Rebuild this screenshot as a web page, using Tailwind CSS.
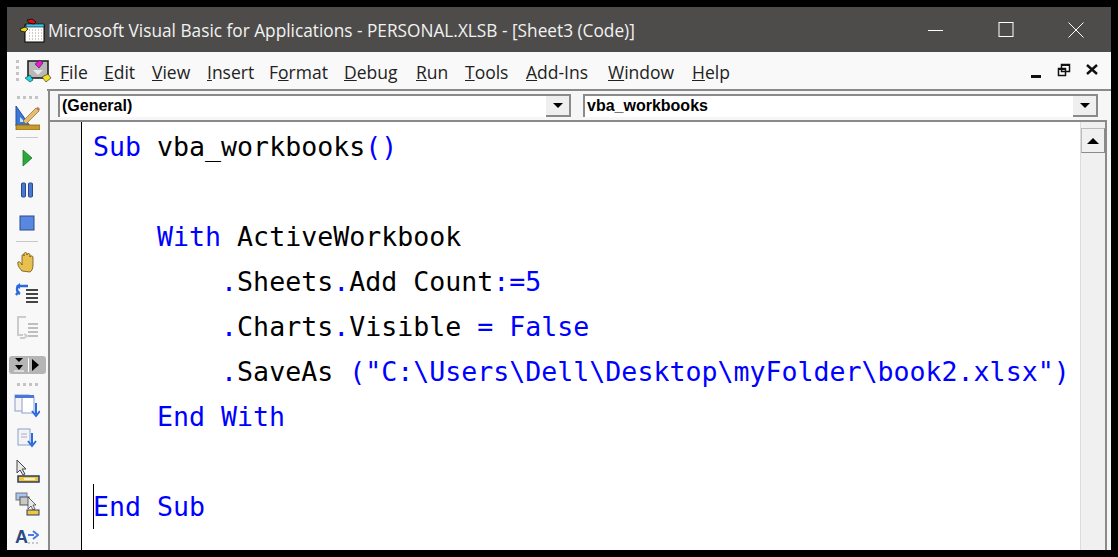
<!DOCTYPE html>
<html lang="en">
<head>
  <meta charset="UTF-8">
  <script src="https://cdn.jsdelivr.net/npm/@tailwindcss/browser@4"></script>
  <title>Microsoft Visual Basic for Applications</title>
</head>
<body class="bg-black w-[1118px] h-[557px] overflow-hidden pt-[7px] pl-[7px]">
<div class="w-[1104px] h-[543px] flex flex-col bg-[#f6f6f6] overflow-hidden">

  <!-- Title bar -->
  <header class="h-[45px] shrink-0 bg-[#4d4c4a] flex items-center text-[#f2f2f2]">
    <svg class="ml-[12px] mr-[3px] w-[26px] h-[26px] shrink-0" viewBox="0 0 26 26">
      <rect x="6" y="8" width="19" height="17" fill="#fff" stroke="#000"/>
      <rect x="7" y="7" width="18" height="3" fill="#39c6f0" stroke="#000" stroke-width=".6"/>
      <path d="M8 3l5-1 4 3-2 2-5-1z" fill="#e01010" stroke="#000" stroke-width=".7"/>
      <path d="M1 12l5-2 3 2-3 3-4-1z" fill="#e8d820" stroke="#000" stroke-width=".7"/>
      <path d="M10 13h13M10 16h13M10 19h13M10 22h13" stroke="#999" stroke-dasharray="1 2"/>
    </svg>
    <span class="font-['Open_Sans',sans-serif] text-[17.250px] relative top-[1px]">Microsoft Visual Basic for Applications - PERSONAL.XLSB - [Sheet3 (Code)]</span>
    <div class="ml-auto flex items-center">
      <svg class="w-[16px] h-[16px] mr-[54px]" viewBox="0 0 16 16"><path d="M0 8.500h15" stroke="#fff"/></svg>
      <svg class="w-[16px] h-[16px] mr-[54px]" viewBox="0 0 16 16"><rect x="1" y=".5" width="14" height="14" fill="none" stroke="#fff"/></svg>
      <svg class="w-[16px] h-[16px] mr-[27px]" viewBox="0 0 16 16"><path d="M.5.5l15 15M15.500.5l-15 15" stroke="#fff"/></svg>
    </div>
  </header>

  <!-- Menu bar -->
  <div class="h-[37px] shrink-0 bg-[#f9f9f9] flex items-center relative">
    <div class="ml-[9px] w-[3px] h-[22px] flex flex-col justify-between">
      <i class="block w-[3px] h-[3px] bg-[#c4c4c4]"></i><i class="block w-[3px] h-[3px] bg-[#c4c4c4]"></i><i class="block w-[3px] h-[3px] bg-[#c4c4c4]"></i><i class="block w-[3px] h-[3px] bg-[#c4c4c4]"></i>
    </div>
    <svg class="ml-[5px] w-[28px] h-[24px] shrink-0" viewBox="0 0 28 24">
      <rect x="4" y="2" width="20" height="17" fill="#b8b8b8" stroke="#222" stroke-width="1.6"/>
      <path d="M9 11l5 5 5-5z" fill="#e8e8e8"/>
      <path d="M11 5l5-4 3 3-4 5z" fill="#f018d8" stroke="#222" stroke-width=".6"/>
      <path d="M1 19l5-3 3 5-3 2z" fill="#18d8e8" stroke="#222" stroke-width=".6"/>
      <path d="M18 18l6-3 3 4-5 4z" fill="#f0e020" stroke="#222" stroke-width=".6"/>
    </svg>
    <nav class="absolute left-[53px] top-[9px] flex font-['Open_Sans',sans-serif] text-[17.500px] leading-[22px] text-[#222]">
      <span class="w-[44px]"><u>F</u>ile</span>
      <span class="w-[48px]"><u>E</u>dit</span>
      <span class="w-[55px]"><u>V</u>iew</span>
      <span class="w-[62px]"><u>I</u>nsert</span>
      <span class="w-[75px]">F<u>o</u>rmat</span>
      <span class="w-[72px]"><u>D</u>ebug</span>
      <span class="w-[49px]"><u>R</u>un</span>
      <span class="w-[61px]"><u>T</u>ools</span>
      <span class="w-[82px]"><u>A</u>dd-Ins</span>
      <span class="w-[84px]"><u>W</u>indow</span>
      <span><u>H</u>elp</span>
    </nav>
    <div class="ml-auto flex items-center gap-[14px] mr-[12px]">
      <svg class="w-[14px] h-[14px] relative top-[1px]" viewBox="0 0 14 14"><path d="M2 10h10v3H2z" fill="#111"/></svg>
      <svg class="w-[14px] h-[14px] relative -top-[1px]" viewBox="0 0 14 14"><path d="M4.500 1.500h8v7h-8zM1.500 5.500h7v7h-7z" fill="#fff" stroke="#111" stroke-width="1.500"/><path d="M4 1h9v2H4zM1 5h8v2H1z" fill="#111"/></svg>
      <svg class="w-[14px] h-[14px] relative -top-[1px]" viewBox="0 0 14 14"><path d="M2 2l10 9M12 2L2 11" stroke="#111" stroke-width="2.400"/></svg>
    </div>
  </div>

  <div class="flex-1 flex min-h-0 border-t-[2px] border-[#8a8a8a]">
    <!-- Left toolbar -->
    <aside class="w-[40px] shrink-0 -mt-[2px] bg-[#f8f8f8] flex flex-col items-center relative">
      <div class="mt-[7px] h-[3px] flex gap-[3px]"><i class="block w-[3px] h-[3px] bg-[#c4c4c4]"></i><i class="block w-[3px] h-[3px] bg-[#c4c4c4]"></i><i class="block w-[3px] h-[3px] bg-[#c4c4c4]"></i><i class="block w-[3px] h-[3px] bg-[#c4c4c4]"></i></div>
      <svg class="mt-[5px] w-[26px] h-[26px]" viewBox="0 0 26 26">
        <path d="M2 2v20h14z" fill="#3a78d8" stroke="#254f9c"/>
        <path d="M6 13v5h5z" fill="#cfe0f8"/>
        <path d="M9 17L22 4l3 3-13 13z" fill="#e6bd6c" stroke="#8a6a30" stroke-width=".7"/>
        <path d="M22 4l3 3 1-2-2-2z" fill="#d86a60"/>
        <rect x="2" y="21" width="24" height="5" fill="#c89a28" stroke="#7a5a10" stroke-width=".7"/>
      </svg>
      <div class="mt-[7px] w-[22px] h-px bg-[#c8c8c8]"></div>
      <svg class="mt-[11px] w-[14px] h-[18px]" viewBox="0 0 14 18"><path d="M3 1l9 8-9 8z" fill="#2aa83a" stroke="#1a7a2a" stroke-width=".8"/></svg>
      <svg class="mt-[15px] w-[14px] h-[16px]" viewBox="0 0 14 16"><rect x="1.500" y="1" width="4" height="14" rx="1" fill="#4a78d0" stroke="#2a4a90"/><rect x="8.500" y="1" width="4" height="14" rx="1" fill="#4a78d0" stroke="#2a4a90"/></svg>
      <svg class="mt-[17px] w-[16px] h-[16px]" viewBox="0 0 16 16"><rect x="1" y="1" width="14" height="14" fill="#5a88e0" stroke="#2a4a90"/></svg>
      <div class="mt-[10px] w-[22px] h-px bg-[#c8c8c8]"></div>
      <svg class="mt-[9px] w-[22px] h-[22px]" viewBox="0 0 22 22"><path d="M6 20C3 17 1 13 2 11c2-1 3 1 4 3V5c0-2 2-2 2 0V3c0-2 3-2 3 0v1c0-2 3-2 3 0v2c0-2 3-1 3 0v8c0 3-1 6-3 7z" fill="#e8c050" stroke="#6a5010" stroke-width=".8"/></svg>
      <svg class="mt-[10px] w-[24px] h-[22px]" viewBox="0 0 24 22"><path d="M11 7h12M11 11h12M11 15h12M11 19h12" stroke="#444" stroke-width="2"/><path d="M13 3H5C1 3 1 9 5 11M4 8l-3 4" fill="none" stroke="#2a6ae0" stroke-width="2.400"/><path d="M5 0L1 3l4 3z" fill="#2a6ae0"/></svg>
      <svg class="mt-[11px] w-[24px] h-[24px]" viewBox="0 0 24 24"><path d="M13 8h10M13 12h10M13 16h10M13 20h10" stroke="#aaa" stroke-width="1.500"/><path d="M11 1H3v18h5" fill="none" stroke="#ccc" stroke-width="2"/><path d="M5 22h4l3-2-3-2" fill="none" stroke="#ccc" stroke-width="2"/></svg>
      <div class="mt-[16px] w-[37px] h-[18px] bg-[#b5b5b5] rounded-[3px] flex items-center justify-center gap-[4px]">
        <svg class="w-[10px] h-[14px]" viewBox="0 0 10 14"><path d="M1 0h8L5 4zM1 7h8L5 12z" fill="#000"/><path d="M0 13h10" stroke="#fff"/></svg>
        <svg class="w-[12px] h-[14px]" viewBox="0 0 12 14"><path d="M.5 0v14" stroke="#fff"/><path d="M4 1l7 6-7 6z" fill="#000"/></svg>
      </div>
      <div class="mt-[9px] h-[3px] flex gap-[3px]"><i class="block w-[3px] h-[3px] bg-[#c4c4c4]"></i><i class="block w-[3px] h-[3px] bg-[#c4c4c4]"></i><i class="block w-[3px] h-[3px] bg-[#c4c4c4]"></i><i class="block w-[3px] h-[3px] bg-[#c4c4c4]"></i></div>
      <svg class="mt-[8px] w-[26px] h-[24px]" viewBox="0 0 26 24"><rect x="1" y="1" width="14" height="16" fill="#f4f4f4" stroke="#8aa0c8"/><rect x="8" y="3" width="12" height="16" fill="#fff" stroke="#8aa0c8"/><rect x="1" y="1" width="19" height="3" fill="#4a78d8"/><path d="M22 9v11M18 17l4 5 4-5" fill="none" stroke="#2a6ae0" stroke-width="2"/></svg>
      <svg class="mt-[10px] w-[20px] h-[20px]" viewBox="0 0 20 20"><rect x="1" y="1" width="12" height="16" fill="#f4f4f4" stroke="#8aa0c8"/><path d="M4 6h6M4 9h6" stroke="#aac"/><path d="M15 5v11M11 13l4 5 4-5" fill="none" stroke="#2a6ae0" stroke-width="2"/></svg>
      <svg class="mt-[11px] w-[25px] h-[24px]" viewBox="0 0 25 24"><path d="M2 1v13l3-3 3 5 2-1-3-5h4z" fill="#e8e8e8" stroke="#444"/><rect x="3" y="17" width="21" height="6" fill="#f0c838" stroke="#2a3a6a" stroke-width="1.500"/><rect x="9" y="19" width="11" height="2" fill="#f8f0c0"/></svg>
      <svg class="mt-[9px] w-[25px] h-[24px]" viewBox="0 0 25 24"><rect x="1" y="1" width="11" height="7" fill="#a8c4f0" stroke="#777"/><rect x="5" y="5" width="9" height="8" fill="#c8c8c8" stroke="#555"/><path d="M13 5v12l3-3 2 4 2-1-2-4h3z" fill="#e8e8e8" stroke="#444" stroke-width=".8"/><rect x="12" y="18" width="12" height="5" fill="#f0c838" stroke="#2a3a6a"/></svg>
      <div class="mt-[11px] flex items-center h-[20px]">
        <span class="font-['Liberation_Sans',sans-serif] font-bold text-[18px] leading-none text-[#2a4a80]">A</span>
        <svg class="w-[11px] h-[14px]" viewBox="0 0 11 14"><path d="M0 5h6M5 1l5 4-5 4" fill="none" stroke="#4a7ae0" stroke-width="2"/><path d="M0 13h10" stroke="#999" stroke-dasharray="2 2"/></svg>
      </div>
    </aside>

    <!-- Code pane -->
    <div class="flex-1 flex flex-col min-w-0 border-l-[2px] border-[#8a8a8a] -mt-[2px] mr-[2px] ml-[1px] bg-[#f6f6f6]">
      <div class="h-[31px] shrink-0 flex items-start gap-[12px] pt-[3px] pl-[8px] pr-[11px] border-t-[2px] border-[#8a8a8a] font-['Liberation_Sans',sans-serif] font-bold text-[16px] text-black">
        <div class="w-[513px] h-[23px] flex items-center bg-white border-t-[2px] border-l-[2px] border-[#8a8a8a] pl-[2px]">
          <span class="relative -top-[1px]">(General)</span>
          <div class="ml-auto w-[25px] h-[21px] bg-[#efefef] border-r-[2px] border-b-[2px] border-[#8a8a8a] flex items-center justify-center"><i class="block w-0 h-0 border-x-[5px] border-x-transparent border-t-[5px] border-t-black"></i></div>
        </div>
        <div class="flex-1 h-[23px] flex items-center bg-white border-l-[2px] border-t-[2px] border-[#8a8a8a] pl-[2px]">
          <span class="relative -top-[1px]">vba_workbooks</span>
          <div class="ml-auto w-[25px] h-[21px] bg-[#efefef] border-r-[2px] border-b-[2px] border-[#8a8a8a] flex items-center justify-center"><i class="block w-0 h-0 border-x-[5px] border-x-transparent border-t-[5px] border-t-black"></i></div>
        </div>
      </div>

      <div class="flex-1 flex min-h-0 border-t-[2px] border-r-[2px] border-[#8a8a8a] mr-[2px]">
        <div class="w-[32px] shrink-0 bg-[#f2f2f2] border-r border-black"></div>
        <main class="flex-1 bg-white pl-[11px] pt-[2px] relative font-['DejaVu_Sans_Mono',monospace] text-[26.600px] leading-[45px] text-black overflow-hidden">
          <div class="h-[45px] whitespace-pre"><span class="text-[#0000ff]">Sub</span> vba_workbooks<span class="text-[#0000ff]">()</span></div>
          <div class="h-[45px]"></div>
          <div class="h-[45px] whitespace-pre">    <span class="text-[#0000ff]">With</span> ActiveWorkbook</div>
          <div class="h-[45px] whitespace-pre">        <span class="text-[#0000ff]">.</span>Sheets<span class="text-[#0000ff]">.</span>Add Count<span class="text-[#0000ff]">:=5</span></div>
          <div class="h-[45px] whitespace-pre">        <span class="text-[#0000ff]">.</span>Charts<span class="text-[#0000ff]">.</span>Visible <span class="text-[#0000ff]">= False</span></div>
          <div class="h-[45px] whitespace-pre">        <span class="text-[#0000ff]">.</span>SaveAs <span class="text-[#0000ff]">("C:\Users\Dell\Desktop\myFolder\book2.xlsx")</span></div>
          <div class="h-[45px] whitespace-pre">    <span class="text-[#0000ff]">End With</span></div>
          <div class="h-[45px]"></div>
          <div class="h-[45px] whitespace-pre relative"><i class="absolute left-0 top-0 w-px h-[45px] bg-black"></i><span class="text-[#0000ff]">End Sub</span></div>
        </main>
        <!-- Scrollbar -->
        <div class="w-[25px] shrink-0 bg-[#f0f0f0] border-l border-[#dcdcdc] pt-[6px]">
          <div class="h-[25px] bg-[#f0f0f0] border border-[#bbb] border-r-[#8a8a8a] border-b-[#8a8a8a] flex items-center justify-center"><i class="block w-0 h-0 border-x-[6px] border-x-transparent border-b-[6px] border-b-black"></i></div>
        </div>
      </div>
    </div>
  </div>
</div>
</body>
</html>
